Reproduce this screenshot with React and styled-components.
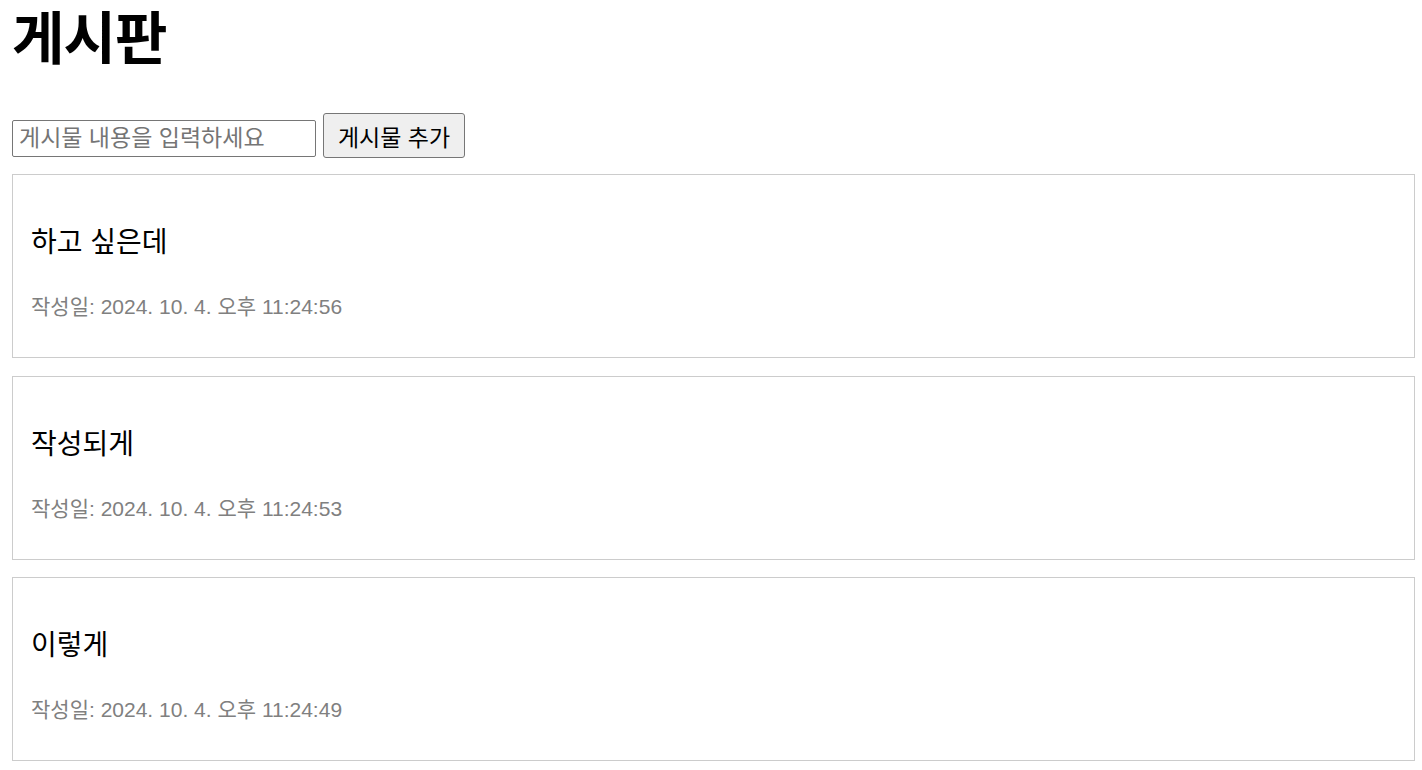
import React, { useState } from "react";
import styled, { createGlobalStyle } from "styled-components";

const Global = createGlobalStyle`
  body {
    margin: 0;
    background: #ffffff;
    font-family: "Liberation Sans", "Noto Sans CJK KR", sans-serif;
    color: #000;
  }
`;

const Page = styled.div`
  padding: 0 7px 0 12px;
`;

const Title = styled.h1`
  margin: 0;
  padding-top: 0;
  height: 113px;
  box-sizing: border-box;
  font-family: "Noto Sans CJK KR", sans-serif;
  font-size: 57px;
  line-height: 68px;
  font-weight: 700;
  letter-spacing: -1px;
`;

const Form = styled.form`
  display: flex;
  align-items: flex-end;
  gap: 7px;
  margin-bottom: 16px;
`;

const Input = styled.input`
  width: 304px;
  height: 37px;
  box-sizing: border-box;
  margin-bottom: 1px;
  padding: 0 6px;
  border: 1px solid #767676;
  border-radius: 2px;
  font-family: "Liberation Sans", "Noto Sans CJK KR", sans-serif;
  font-size: 23px;
  &::placeholder {
    color: #757575;
  }
`;

const Button = styled.button`
  width: 142px;
  height: 45px;
  box-sizing: border-box;
  background: #efefef;
  border: 1px solid #767676;
  border-radius: 3px;
  font-family: "Liberation Sans", "Noto Sans CJK KR", sans-serif;
  font-size: 23px;
  color: #000;
  padding: 0;
`;

const List = styled.div`
  display: flex;
  flex-direction: column;
  gap: 17.5px;
`;

const Card = styled.div`
  border: 1px solid #cccccc;
  height: 184px;
  box-sizing: border-box;
  padding: 0 18px;
  display: flex;
  flex-direction: column;
`;

const Content = styled.p`
  margin: 52px 0 0;
  font-size: 28px;
  line-height: 32px;
`;

const DateText = styled.p`
  margin: 36px 0 0;
  font-size: 21px;
  line-height: 24px;
  color: #808080;
`;

const initial = [
  { id: 3, text: "하고 싶은데", date: "2024. 10. 4. 오후 11:24:56" },
  { id: 2, text: "작성되게", date: "2024. 10. 4. 오후 11:24:53" },
  { id: 1, text: "이렇게", date: "2024. 10. 4. 오후 11:24:49" },
];

export default function App() {
  const [posts] = useState(initial);
  const [value, setValue] = useState("");
  return (
    <Page>
      <Global />
      <Title>게시판</Title>
      <Form onSubmit={(e) => e.preventDefault()}>
        <Input
          placeholder="게시물 내용을 입력하세요"
          value={value}
          onChange={(e) => setValue(e.target.value)}
        />
        <Button type="submit">게시물 추가</Button>
      </Form>
      <List>
        {posts.map((p) => (
          <Card key={p.id}>
            <Content>{p.text}</Content>
            <DateText>작성일: {p.date}</DateText>
          </Card>
        ))}
      </List>
    </Page>
  );
}
